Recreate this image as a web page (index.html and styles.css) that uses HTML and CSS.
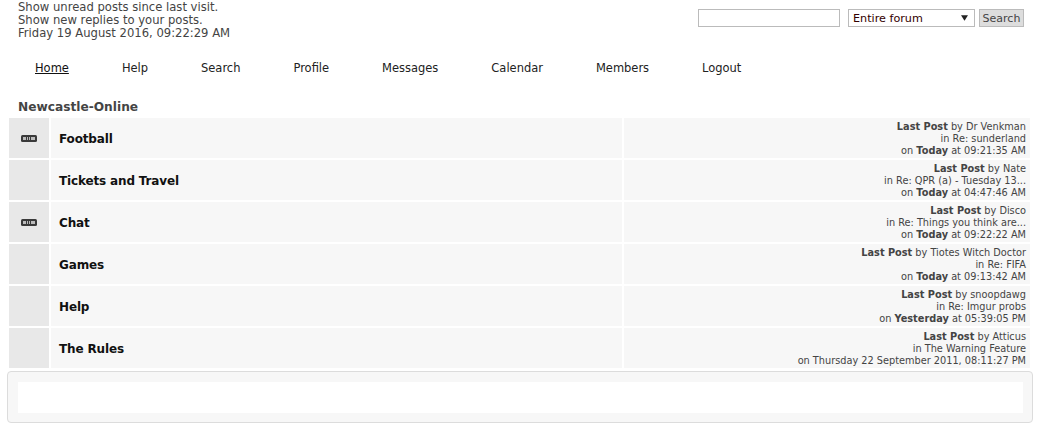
FILE: index.html
```html
<!DOCTYPE html>
<html lang="en">
<head>
<meta charset="utf-8">
<title>Newcastle-Online</title>
<link rel="stylesheet" href="styles.css">
</head>
<body>
<header class="top">
  <div class="user-info">
    <a href="#">Show unread posts since last visit.</a><br>
    <a href="#">Show new replies to your posts.</a><br>
    Friday 19 August 2016, 09:22:29 AM
  </div>
  <form class="search">
    <input class="search-text" type="text">
    <div class="search-select"><span>Entire forum</span><svg class="arrow" width="9" height="7" viewBox="0 0 9 7"><path d="M0 0h9L4.500 7z"/></svg></div>
    <div class="search-btn">Search</div>
  </form>
</header>
<nav class="menu">
  <a class="active" href="#">Home</a>
  <a href="#">Help</a>
  <a href="#">Search</a>
  <a href="#">Profile</a>
  <a href="#">Messages</a>
  <a href="#">Calendar</a>
  <a href="#">Members</a>
  <a href="#">Logout</a>
</nav>
<h2 class="cat">Newcastle-Online</h2>
<main class="boards">
  <div class="row">
    <div class="icon"><svg width="16" height="7" viewBox="0 0 16 7"><rect width="16" height="7" rx="1.500" fill="#3a3a3a"/><path d="M2 2h3v3H2zM6 2h1v3H6zM8 2h1v3H8zM10 2h4v3h-4z" fill="#bbb"/></svg></div>
    <div class="name">Football</div>
    <div class="last"><b>Last Post</b> by <a href="#">Dr Venkman</a><br>in <a href="#">Re: sunderland</a><br>on <b>Today</b> at 09:21:35 AM</div>
  </div>
  <div class="row">
    <div class="icon"></div>
    <div class="name">Tickets and Travel</div>
    <div class="last"><b>Last Post</b> by <a href="#">Nate</a><br>in <a href="#">Re: QPR (a) - Tuesday 13...</a><br>on <b>Today</b> at 04:47:46 AM</div>
  </div>
  <div class="row">
    <div class="icon"><svg width="16" height="7" viewBox="0 0 16 7"><rect width="16" height="7" rx="1.500" fill="#3a3a3a"/><path d="M2 2h3v3H2zM6 2h1v3H6zM8 2h1v3H8zM10 2h4v3h-4z" fill="#bbb"/></svg></div>
    <div class="name">Chat</div>
    <div class="last"><b>Last Post</b> by <a href="#">Disco</a><br>in <a href="#">Re: Things you think are...</a><br>on <b>Today</b> at 09:22:22 AM</div>
  </div>
  <div class="row">
    <div class="icon"></div>
    <div class="name">Games</div>
    <div class="last"><b>Last Post</b> by <a href="#">Tiotes Witch Doctor</a><br>in <a href="#">Re: FIFA</a><br>on <b>Today</b> at 09:13:42 AM</div>
  </div>
  <div class="row">
    <div class="icon"></div>
    <div class="name">Help</div>
    <div class="last"><b>Last Post</b> by <a href="#">snoopdawg</a><br>in <a href="#">Re: Imgur probs</a><br>on <b>Yesterday</b> at 05:39:05 PM</div>
  </div>
  <div class="row">
    <div class="icon"></div>
    <div class="name">The Rules</div>
    <div class="last"><b>Last Post</b> by <a href="#">Atticus</a><br>in <a href="#">The Warning Feature</a><br>on Thursday 22 September 2011, 08:11:27 PM</div>
  </div>
</main>
<section class="panel"><div class="panel-inner"></div></section>
</body>
</html>
```
FILE: styles.css
```css
* { box-sizing: border-box; }
html, body { margin: 0; padding: 0; }
body {
  background: #fff;
  color: #444;
  font-family: "DejaVu Sans", Verdana, sans-serif;
  font-size: 11.6px;
  height: 428px;
  overflow: hidden;
}
a { color: inherit; text-decoration: none; }
.top {
  display: flex;
  justify-content: space-between;
  align-items: flex-start;
  height: 39px;
  padding: 0 13px 0 18px;
}
.user-info { line-height: 13px; padding-top: 1px; white-space: nowrap; }
.search { display: flex; align-items: center; margin-top: 9px; }
.search-text {
  width: 142px; height: 18px; margin: 0 8px 0 0; padding: 0;
  border: 1px solid #bbb; background: #fff;
}
.search-select {
  width: 127px; height: 18px; margin-right: 4px;
  border: 1px solid #bbb;
  display: flex; align-items: center; justify-content: space-between;
  padding: 0 6px 0 4px;
  font-size: 11.2px; color: #300;
}
.search-select .arrow { width: 7px; height: 6px; fill: #222; }
.search-btn {
  width: 45px; height: 18px;
  border: 1px solid #bbb; background: #ddd;
  text-align: center; line-height: 17px; color: #444; font-size: 11px;
}
.menu {
  display: flex;
  gap: 53px;
  padding: 22px 0 0 35px;
  height: 60px;
  color: #222;
  line-height: 14px;
  font-size: 11.48px;
}
.menu .active { color: #111; text-decoration: underline; }
.cat {
  margin: 1px 0 3px 18px;
  font-size: 12.2px;
  line-height: 15px;
  font-weight: bold;
  color: #444;
}
.boards { display: flex; flex-direction: column; gap: 2px; padding: 0 7px 0 9px; }
.row { display: flex; height: 40px; gap: 2px; }
.icon {
  width: 40px; background: #e8e8e8;
  display: flex; align-items: center; justify-content: center;
}
.name {
  width: 571px; background: #f7f7f7;
  padding: 2px 0 0 8px;
  display: flex; align-items: center;
  font-size: 12px; letter-spacing: -0.15px; font-weight: bold; color: #111;
}
.last {
  flex: 1; background: #f7f7f7;
  text-align: right;
  padding: 3px 4px 0 0;
  font-size: 9.75px; line-height: 12px; color: #444;
}
.last a { color: #444; }
.panel {
  margin: 3px 4px 0 7px;
  height: 52px;
  background: #f7f7f7;
  border: 1px solid #dcdcdc;
  border-radius: 4px;
  padding: 10px 9px 9px 10px;
}
.panel-inner { background: #fff; height: 31px; }
```
